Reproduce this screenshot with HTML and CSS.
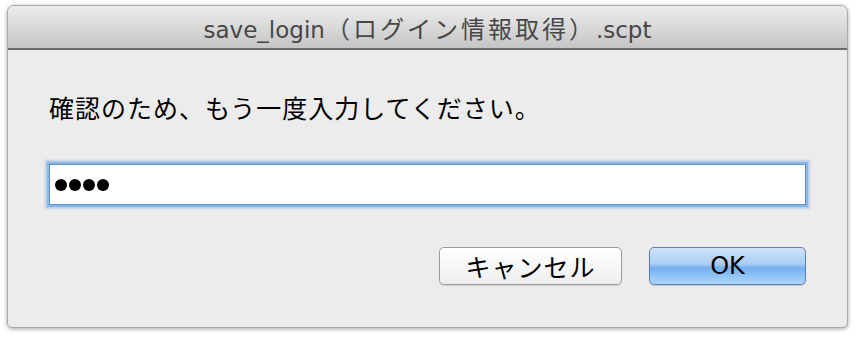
FILE: index.html
```html
<!DOCTYPE html>
<html lang="ja">
<head>
<meta charset="utf-8">
<title>save_login</title>
<link rel="stylesheet" href="styles.css">
</head>
<body>
<div class="window">
  <div class="titlebar">save_login<span class="title-jp">（ログイン情報取得）</span>.scpt</div>
  <div class="content">
    <p class="message">確認のため、もう一度入力してください。</p>
    <div class="field"><span class="dot"></span><span class="dot"></span><span class="dot"></span><span class="dot"></span></div>
    <div class="buttons">
      <button class="btn cancel">キャンセル</button>
      <button class="btn ok">OK</button>
    </div>
  </div>
</div>
</body>
</html>
```

FILE: styles.css
```css
html, body {
  margin: 0;
  padding: 0;
  background: #ffffff;
}
body {
  width: 856px;
  height: 338px;
  overflow: hidden;
  font-family: "DejaVu Sans", "Noto Sans CJK JP", sans-serif;
}
.window {
  margin: 5px 8px 0 7px;
  height: 323px;
  box-sizing: border-box;
  border: 1px solid #a9a9a9;
  border-radius: 7px 7px 5px 5px;
  background: #ececec;
  box-shadow: 0 1px 4px rgba(0,0,0,0.35);
  overflow: hidden;
  display: flex;
  flex-direction: column;
}
.titlebar {
  height: 42px;
  flex: none;
  background: linear-gradient(#ececec, #d9d9d9 50%, #c5c5c5);
  border-bottom: 2px solid #6b6b6b;
  color: #474747;
  font-size: 23px;
  line-height: 44px;
  text-align: center;
  white-space: nowrap;
}
.title-jp {
  font-family: "Noto Sans CJK JP", sans-serif;
  font-size: 24px;
  letter-spacing: 3px;
  margin: 0 0 0 1px;
}
.content {
  flex: 1;
  padding: 42px 41px 0 41px;
  display: flex;
  flex-direction: column;
}
.message {
  margin: 0;
  font-family: "Noto Sans CJK JP", sans-serif;
  font-size: 25px;
  line-height: 30px;
  color: #000;
  letter-spacing: 1px;
}
.field {
  margin-top: 42px;
  height: 41px;
  box-sizing: border-box;
  background: #fff;
  border: 1px solid #5f93d0;
  box-shadow: 0 0 0 2px #8db6e4, 0 0 2px 4px rgba(130,175,225,0.5);
  display: flex;
  align-items: center;
  gap: 2px;
  padding-left: 5px;
}
.dot {
  width: 12px;
  height: 12px;
  border-radius: 50%;
  background: #000;
}
.buttons {
  margin-top: 42px;
  display: flex;
  justify-content: flex-end;
  gap: 27px;
}
.btn {
  height: 38px;
  box-sizing: border-box;
  border-radius: 5px;
  color: #000;
  padding: 0;
  line-height: 34px;
}
.cancel {
  width: 183px;
  font-family: "Noto Sans CJK JP", sans-serif;
  font-size: 25px;
  letter-spacing: 1px;
  border: 1px solid #9b9b9b;
  background: linear-gradient(#ffffff, #f7f7f7 50%, #eeeeee);
  box-shadow: 0 1px 1px rgba(0,0,0,0.12);
}
.ok {
  width: 157px;
  font-family: "DejaVu Sans", sans-serif;
  font-size: 24px;
  border: 1px solid #5e7fae;
  background: linear-gradient(#cfe3fa, #a9cdf5 45%, #74aff0 55%, #aed6fc);
  box-shadow: 0 1px 1px rgba(0,0,0,0.15);
}
```
